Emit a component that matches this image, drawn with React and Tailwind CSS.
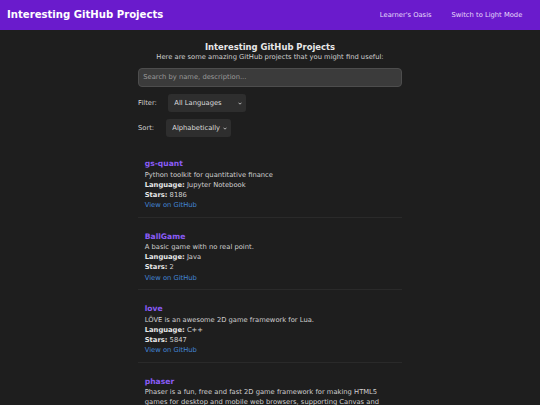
import { useState } from 'react';

const PROJECTS = [
  { name: 'gs-quant', desc: 'Python toolkit for quantitative finance', lang: 'Jupyter Notebook', stars: 8186 },
  { name: 'BallGame', desc: 'A basic game with no real point.', lang: 'Java', stars: 2 },
  { name: 'love', desc: 'LÖVE is an awesome 2D game framework for Lua.', lang: 'C++', stars: 5847 },
  { name: 'phaser', desc: 'Phaser is a fun, free and fast 2D game framework for making HTML5 games for desktop and mobile web browsers, supporting Canvas and WebGL rendering.', lang: 'JavaScript', stars: 37125 },
];

function Chevron() {
  return (
    <svg width="4" height="3" viewBox="0 0 4 3" className="pointer-events-none absolute right-[3.5px] top-[8px]">
      <path d="M0.5 0.7 L2 2.2 L3.5 0.7" fill="none" stroke="#d8d8d8" strokeWidth="0.8" />
    </svg>
  );
}

function Picker({ width, value, options, onChange }) {
  return (
    <div className="relative flex">
      <select value={value} onChange={e => onChange(e.target.value)}
        className={`block h-[18.4px] min-h-0 appearance-none rounded-[3px] bg-[#2e2e2e] py-0 pl-[6.6px] text-[6.75px] leading-[18.4px] text-[#dcdcdc] outline-none ${width}`}>
        {options.map(o => <option key={o}>{o}</option>)}
      </select>
      <Chevron />
    </div>
  );
}

export default function App() {
  const [query, setQuery] = useState('');
  const [lang, setLang] = useState('All Languages');
  const [sort, setSort] = useState('Alphabetically');

  return (
    <div className="min-h-screen bg-[#1e1e1e] font-['DejaVu_Sans',sans-serif]">
      <header className="flex h-[30px] items-center justify-between bg-[#6a1bcc] pl-[7px] pr-[17.7px]">
        <h1 className="text-[10.125px] font-bold leading-none text-white">Interesting GitHub Projects</h1>
        <nav className="flex gap-[20px] text-[6.75px] text-[#e6dcfb]">
          <a href="#">Learner's Oasis</a>
          <a href="#">Switch to Light Mode</a>
        </nav>
      </header>

      <main className="mx-auto w-[264px] pt-[11.5px]">
        <h2 className="text-center text-[8.44px] font-bold leading-[10px] text-[#e8e8e8]">Interesting GitHub Projects</h2>
        <p className="text-center text-[6.75px] leading-[10.125px] text-[#d0d0d0]">
          Here are some amazing GitHub projects that you might find useful:
        </p>

        <input value={query} onChange={e => setQuery(e.target.value)}
          placeholder="Search by name, description..."
          className="mt-[6.3px] block h-[19px] w-full rounded-[4px] border border-[#4d4d4d] bg-[#3b3b3b] px-[4.2px] text-[6.75px] text-[#e0e0e0] outline-none placeholder:text-[#9a9a9a]" />

        <div className="mt-[7px] flex h-[18.4px] items-center">
          <span className="text-[6.75px] leading-none text-[#d0d0d0]">Filter:</span>
          <div className="ml-[10.8px]">
            <Picker width="w-[78px]" value={lang} onChange={setLang}
              options={['All Languages', 'Jupyter Notebook', 'Java', 'C++', 'JavaScript']} />
          </div>
        </div>

        <div className="mt-[6.6px] flex h-[18.4px] items-center">
          <span className="text-[6.75px] leading-none text-[#d0d0d0]">Sort:</span>
          <div className="ml-[11.6px]">
            <Picker width="w-[65px]" value={sort} onChange={setSort}
              options={['Alphabetically', 'Stars']} />
          </div>
        </div>

        {/* project cards */}
        <div className="mt-[14.3px]">
          {PROJECTS.map(p => (
            <div key={p.name} className="mb-[6px] border-b border-[#2a2a2a] p-[6.75px]">
              <h3 className="text-[7.6px] font-bold leading-[11.4px] text-[#8a5cf6]">{p.name}</h3>
              <div className="text-[6.75px] leading-[10.125px] text-[#d0d0d0]">
                <p>{p.desc}</p>
                <p><b className="text-[#e8e8e8]">Language:</b> {p.lang}</p>
                <p><b className="text-[#e8e8e8]">Stars:</b> {p.stars}</p>
                <a href="#" className="text-[#4285d6]">View on GitHub</a>
              </div>
            </div>
          ))}
        </div>
      </main>
    </div>
  );
}
